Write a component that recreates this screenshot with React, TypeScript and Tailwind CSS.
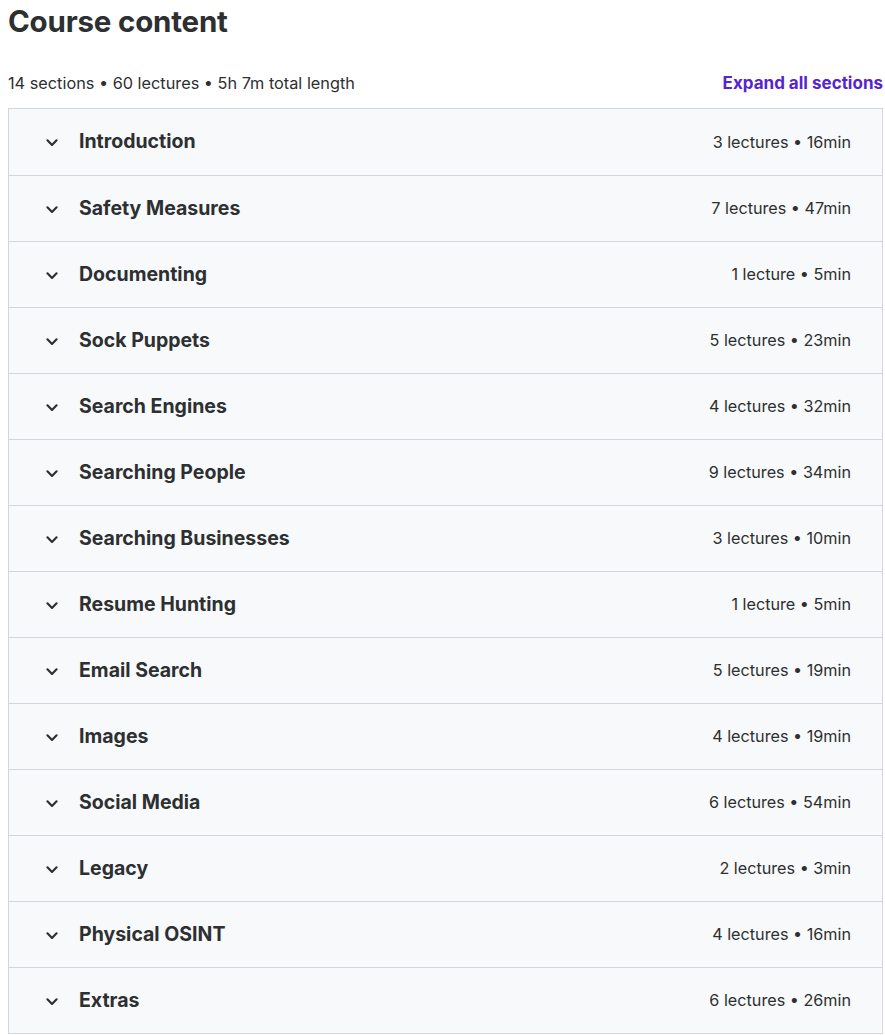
import React from 'react';

type Section = { title: string; lectures: number; length: string };

const sections: Section[] = [
  { title: 'Introduction', lectures: 3, length: '16min' },
  { title: 'Safety Measures', lectures: 7, length: '47min' },
  { title: 'Documenting', lectures: 1, length: '5min' },
  { title: 'Sock Puppets', lectures: 5, length: '23min' },
  { title: 'Search Engines', lectures: 4, length: '32min' },
  { title: 'Searching People', lectures: 9, length: '34min' },
  { title: 'Searching Businesses', lectures: 3, length: '10min' },
  { title: 'Resume Hunting', lectures: 1, length: '5min' },
  { title: 'Email Search', lectures: 5, length: '19min' },
  { title: 'Images', lectures: 4, length: '19min' },
  { title: 'Social Media', lectures: 6, length: '54min' },
  { title: 'Legacy', lectures: 2, length: '3min' },
  { title: 'Physical OSINT', lectures: 4, length: '16min' },
  { title: 'Extras', lectures: 6, length: '26min' },
];

function Chevron() {
  return (
    <svg width="20" height="20" viewBox="0 0 24 24" fill="none" stroke="#2d2f31" strokeWidth="2.6" strokeLinecap="round" strokeLinejoin="round">
      <path d="M6.5 10l5.5 5.5 5.5-5.5" />
    </svg>
  );
}

function SectionRow({ section }: { section: Section }) {
  const count = `${section.lectures} ${section.lectures === 1 ? 'lecture' : 'lectures'}`;
  return (
    <button className="flex h-[66px] w-full items-center border-t border-[#d1d7dc] bg-[#f7f9fa] pl-[33px] pr-[31px] text-left first:border-t-0">
      <Chevron />
      <span className="ml-[17px] flex-1 text-[19.5px] font-bold text-[#2d2f31]">{section.title}</span>
      <span className="text-[16.2px] text-[#2d2f31]">
        {count} • {section.length}
      </span>
    </button>
  );
}

export default function App() {
  return (
    <div className="min-h-screen bg-white pl-[8px] pr-[2px] text-[#2d2f31]" style={{ fontFamily: 'Inter, "Noto Sans", sans-serif' }}>
      <h2 className="pt-[3px] text-[29.5px] font-bold leading-[36px] tracking-[-0.2px]">Course content</h2>
      <div className="mt-[33px] mb-[14px] flex items-center justify-between">
        <span className="text-[16.3px] leading-[22px]">14 sections • 60 lectures • 5h 7m total length</span>
        <button className="text-[17px] font-bold leading-[22px] text-[#5624d0]">Expand all sections</button>
      </div>
      <div className="border border-[#d1d7dc]">
        {sections.map((s) => (
          <SectionRow key={s.title} section={s} />
        ))}
      </div>
    </div>
  );
}
